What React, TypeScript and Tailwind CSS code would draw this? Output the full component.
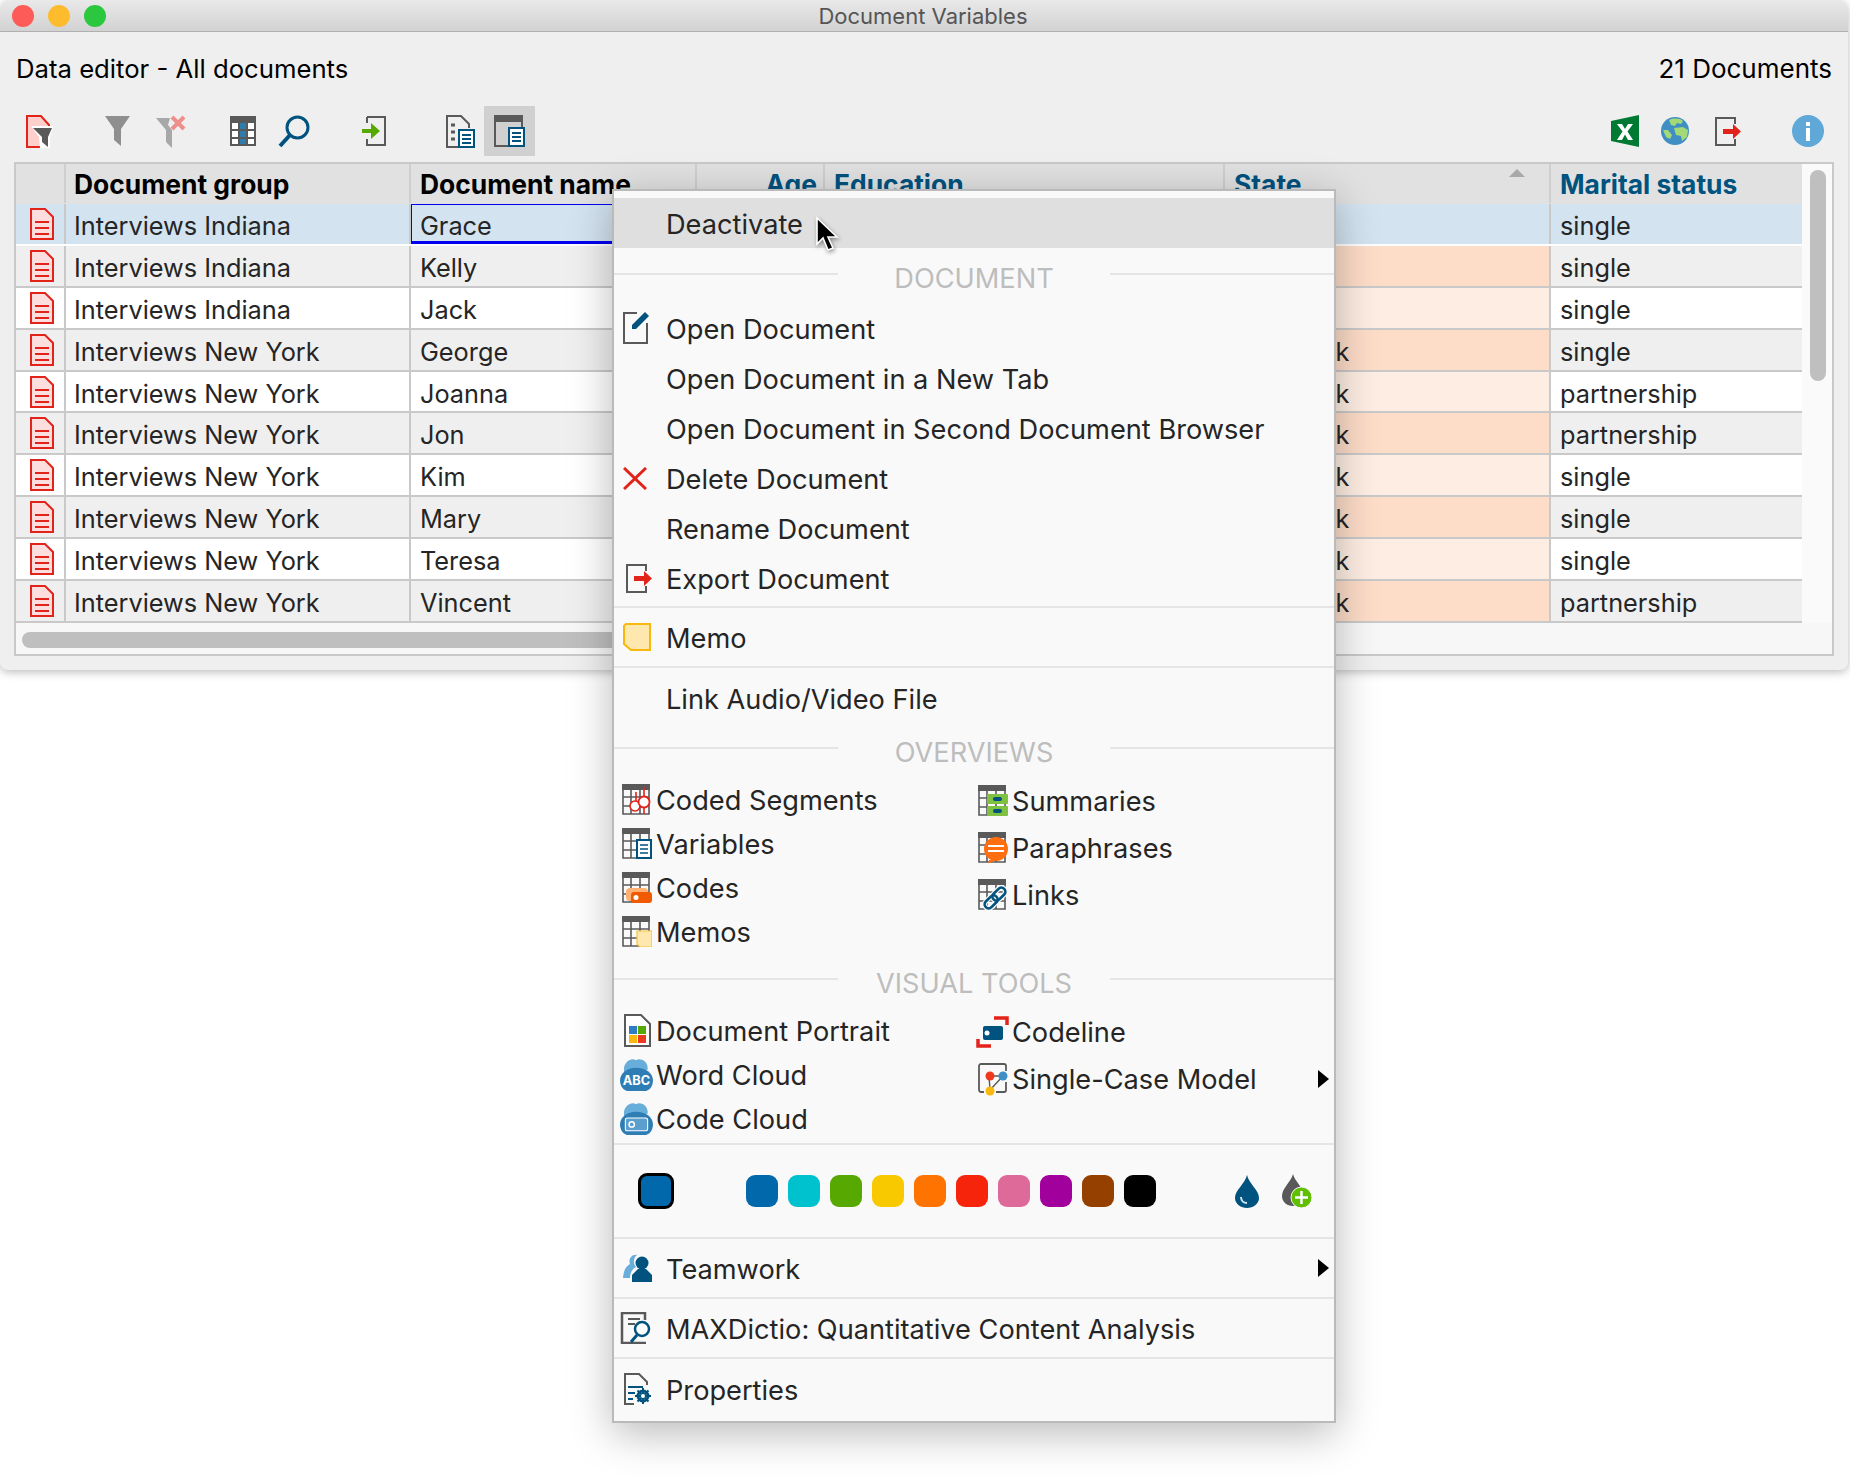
import React from 'react';

const RED = '#e2231a';
const BLUE = '#00527f';
const GRAY = '#595959';

type Row = { group: string; name: string; state: string; status: string };

const rows: Row[] = [
  { group: 'Interviews Indiana', name: 'Grace', state: 'Indiana', status: 'single' },
  { group: 'Interviews Indiana', name: 'Kelly', state: 'Indiana', status: 'single' },
  { group: 'Interviews Indiana', name: 'Jack', state: 'Indiana', status: 'single' },
  { group: 'Interviews New York', name: 'George', state: 'New York', status: 'single' },
  { group: 'Interviews New York', name: 'Joanna', state: 'New York', status: 'partnership' },
  { group: 'Interviews New York', name: 'Jon', state: 'New York', status: 'partnership' },
  { group: 'Interviews New York', name: 'Kim', state: 'New York', status: 'single' },
  { group: 'Interviews New York', name: 'Mary', state: 'New York', status: 'single' },
  { group: 'Interviews New York', name: 'Teresa', state: 'New York', status: 'single' },
  { group: 'Interviews New York', name: 'Vincent', state: 'New York', status: 'partnership' },
];

const swatches = ['bg-[#0068ab]', 'bg-[#00c2cf]', 'bg-[#57a800]', 'bg-[#f9c900]', 'bg-[#ff7300]', 'bg-[#f5240b]', 'bg-[#de6a9a]', 'bg-[#a1009c]', 'bg-[#964000]', 'bg-[#000000]'];

// Icons
function DocIcon() {
  return (
    <svg width="24" height="32" viewBox="0 0 24 32">
      <path d="M1 1H15L23 9V31H1Z" fill="#fddede" stroke={RED} strokeWidth="2" />
      <path d="M5 14H19M5 20H19M5 26H19" stroke={RED} strokeWidth="2" />
    </svg>
  );
}

function FilterDocIcon() {
  return (
    <svg width="27" height="33" viewBox="0 0 27 33">
      <path d="M1 1H15L23 10V32H1Z" fill="#ffcfcb" stroke={RED} strokeWidth="2" />
      <path d="M5 11H27L24 22V33H14L13 22Z" fill="#fff" />
      <path d="M7 13H26L22 22V32L16 27V22Z" fill={GRAY} />
    </svg>
  );
}

function FilterIcon() {
  return (
    <svg width="25" height="30" viewBox="0 0 25 30">
      <path d="M0 0H25L16 13V30L9 24V13Z" fill="#8f8f8f" />
    </svg>
  );
}

function FilterXIcon() {
  return (
    <svg width="30" height="33" viewBox="0 0 30 33">
      <path d="M0 3H14L12 10L16 15V33L10 27V15Z" fill="#a8a8a8" />
      <path d="M16 2L28 14M28 2L16 14" stroke="#ee8f8a" strokeWidth="4" />
    </svg>
  );
}

function ColumnsIcon() {
  return (
    <svg width="26" height="30" viewBox="0 0 26 30">
      <rect x="0" y="0" width="26" height="30" fill={GRAY} />
      <rect x="2" y="7" width="6" height="6" fill="#fff" />
      <rect x="2" y="15" width="6" height="6" fill="#fff" />
      <rect x="2" y="23" width="6" height="5" fill="#fff" />
      <rect x="10" y="7" width="6" height="6" fill="#2e7cab" />
      <rect x="10" y="15" width="6" height="6" fill="#2e7cab" />
      <rect x="10" y="23" width="6" height="5" fill="#2e7cab" />
      <rect x="18" y="7" width="6" height="6" fill="#fff" />
      <rect x="18" y="15" width="6" height="6" fill="#fff" />
      <rect x="18" y="23" width="6" height="5" fill="#fff" />
    </svg>
  );
}

function SearchIcon() {
  return (
    <svg width="32" height="33" viewBox="0 0 32 33">
      <circle cx="19.5" cy="12.5" r="10.5" fill="none" stroke={BLUE} strokeWidth="3" />
      <path d="M12 20L2 31" stroke={BLUE} strokeWidth="4" />
    </svg>
  );
}

function ImportIcon() {
  return (
    <svg width="24" height="30" viewBox="0 0 24 30">
      <path d="M5 1H23V29H5V23M5 7V1" fill="none" stroke={GRAY} strokeWidth="2" />
      <path d="M0 13H9V7L18 15L9 23V17H0Z" fill="#57a800" />
    </svg>
  );
}

function DocListIcon() {
  return (
    <svg width="29" height="33" viewBox="0 0 29 33">
      <path d="M13 32H1V1H15L23 9V13" fill="none" stroke={GRAY} strokeWidth="2" />
      <path d="M5 10H9M5 17H9M5 24H9" stroke={GRAY} strokeWidth="3" />
      <path d="M13 15H28V32H13Z" fill="#fff" stroke={BLUE} strokeWidth="2" />
      <path d="M16 20H25M16 24H25M16 28H25" stroke={BLUE} strokeWidth="2" />
    </svg>
  );
}

function WindowDocIcon() {
  return (
    <svg width="31" height="32" viewBox="0 0 31 32">
      <path d="M1 1H28V12M14 31H1V1" fill="none" stroke={GRAY} strokeWidth="2" />
      <rect x="0" y="0" width="28" height="7" fill={GRAY} />
      <path d="M15 13H30V31H15Z" fill="#fff" stroke={BLUE} strokeWidth="2" />
      <path d="M18 18H27M18 22H27M18 26H27" stroke={BLUE} strokeWidth="2" />
    </svg>
  );
}

function ExcelIcon() {
  return (
    <svg width="28" height="32" viewBox="0 0 28 32">
      <path d="M0 6L28 0V32L0 26Z" fill="#007a33" />
      <path d="M6 9H11L14 14L17 9H22L16.5 16.5L22 25H17L14 19.5L11 25H6L11.5 16.5Z" fill="#fff" />
    </svg>
  );
}

function GlobeIcon() {
  return (
    <svg width="28" height="28" viewBox="0 0 28 28">
      <circle cx="14" cy="14" r="14" fill="#3f8ec4" />
      <path d="M8 3C12 1 19 1 22 4L20 7L16 6L14 9L10 8ZM13 11L22 10L27 13L26 20L21 24L20 19L15 18ZM2 13L7 13L11 18L9 22L5 20Z" fill="#a3d977" />
    </svg>
  );
}

function ExportIcon() {
  return (
    <svg width="27" height="29" viewBox="0 0 27 29">
      <path d="M20 7V1H1V28H20V22" fill="none" stroke={GRAY} strokeWidth="2" />
      <path d="M8 12H18V7L26 14.5L18 22V17H8Z" fill={RED} />
    </svg>
  );
}

function InfoIcon() {
  return (
    <svg width="32" height="32" viewBox="0 0 32 32">
      <circle cx="16" cy="16" r="16" fill="#5fa8d8" />
      <rect x="14" y="7" width="4" height="4" fill="#fff" />
      <rect x="14" y="13" width="4" height="13" fill="#fff" />
    </svg>
  );
}

function OpenIcon() {
  return (
    <svg width="26" height="32" viewBox="0 0 26 32">
      <path d="M14 1H1V31H24V11" fill="none" stroke={GRAY} strokeWidth="2" />
      <path d="M9 13L22 0L26 4L13 17H9Z" fill={BLUE} />
    </svg>
  );
}

function DeleteIcon() {
  return (
    <svg width="24" height="23" viewBox="0 0 24 23">
      <path d="M1 1L23 22M23 1L1 22" stroke={RED} strokeWidth="3" />
    </svg>
  );
}

function MemoIcon() {
  return (
    <svg width="28" height="28" viewBox="0 0 28 28">
      <path d="M3 1H27V27H8L1 21V3Z" fill="#ffe8ad" stroke="#f9b80d" strokeWidth="2" />
    </svg>
  );
}

function TableBase({ children }: { children?: React.ReactNode }) {
  return (
    <svg width="30" height="31" viewBox="0 0 30 31">
      <path d="M1 6V30H27V6M1 13H27M1 22H27M9 6V30M18 6V30" fill="none" stroke={GRAY} strokeWidth="1.6" />
      <rect x="0" y="0" width="28" height="6" fill={GRAY} />
      {children}
    </svg>
  );
}

function CloudBack() {
  return <path d="M4 14C2 6 10 0 15 3C19 0 27 4 26 12Z" fill="#67aedb" />;
}

function TeamIcon() {
  return (
    <svg width="29" height="28" viewBox="0 0 29 28">
      <path d="M0 24C1 14 4 12 7 10C5 5 9 0 14 1C10 4 10 10 13 13C9 15 7 19 7 24Z" fill="#67aedb" />
      <circle cx="19" cy="9" r="6.5" fill={BLUE} />
      <path d="M9 28V21L15 15H23L29 21V28Z" fill={BLUE} />
    </svg>
  );
}

function DictioIcon() {
  return (
    <svg width="33" height="32" viewBox="0 0 33 32">
      <path d="M25 8V1H2V31H26" fill="none" stroke={GRAY} strokeWidth="2.5" />
      <path d="M8 7H20M8 12H15" stroke={GRAY} strokeWidth="2" />
      <circle cx="22" cy="17" r="7" fill="#fff" stroke={BLUE} strokeWidth="2.5" />
      <path d="M17 23L11 30" stroke={BLUE} strokeWidth="3" />
    </svg>
  );
}

function PropsIcon() {
  return (
    <svg width="28" height="32" viewBox="0 0 28 32">
      <path d="M10 31H1V1H15L23 9V12" fill="none" stroke={GRAY} strokeWidth="2" />
      <path d="M4 14H19M4 20H11M4 26H9" stroke={BLUE} strokeWidth="2" />
      <circle cx="19" cy="23" r="5" fill="none" stroke={BLUE} strokeWidth="3" />
      <path d="M19 15V31M11 23H27M13.5 17.5L24.5 28.5M24.5 17.5L13.5 28.5" stroke={BLUE} strokeWidth="2" />
      <circle cx="19" cy="23" r="2" fill="#fff" />
    </svg>
  );
}

function DropIcon() {
  return (
    <svg width="24" height="33" viewBox="0 0 24 33">
      <path d="M12 0C14 9 24 15 24 23C24 29 18 33 12 33C6 33 0 29 0 23C0 15 10 9 12 0Z" fill={BLUE} />
      <path d="M6 22C6 26 9 28 12 28" fill="none" stroke="#cfe3ef" strokeWidth="2" />
    </svg>
  );
}

function DropPlusIcon() {
  return (
    <svg width="30" height="34" viewBox="0 0 30 34">
      <path d="M11 0C13 8 22 14 22 22C22 28 16 32 11 32C5 32 0 28 0 22C0 14 9 8 11 0Z" fill={GRAY} />
      <circle cx="19.5" cy="23.5" r="10.5" fill="#5fbf00" stroke="#f9f9f9" strokeWidth="1" />
      <path d="M19.5 17V30M13 23.5H26" stroke="#fff" strokeWidth="2.5" />
    </svg>
  );
}

function Arrow() {
  return (
    <svg width="11" height="18" viewBox="0 0 11 18">
      <path d="M0 0L11 9L0 18Z" fill="#000" />
    </svg>
  );
}

const leftOverviews: [string, React.ReactNode][] = [
  ['Coded Segments', <TableBase><path d="M22 3V30" stroke={RED} strokeWidth="1.6" /><path d="M14 8V18" stroke={RED} strokeWidth="1.6" /><circle cx="13" cy="22" r="5" fill="#fff" stroke={RED} strokeWidth="1.6" /><circle cx="22" cy="18" r="5.5" fill="#fff" stroke={RED} strokeWidth="1.8" /></TableBase>],
  ['Variables', <TableBase><path d="M15 12H29V30H15Z" fill="#fff" stroke={BLUE} strokeWidth="2" /><path d="M18 17H26M18 21H26M18 25H26" stroke={BLUE} strokeWidth="1.6" /></TableBase>],
  ['Codes', <TableBase><rect x="4" y="16" width="22" height="13" rx="4" fill="#ffb072" /><rect x="9" y="20" width="21" height="11" rx="3" fill="#f15a00" /><circle cx="14" cy="25.5" r="2.5" fill="#fff" /></TableBase>],
  ['Memos', <TableBase><path d="M15 15H30V31H18L15 28Z" fill="#ffe8ad" stroke="#f9c23c" strokeWidth="1.2" /></TableBase>],
];

const rightOverviews: [string, React.ReactNode][] = [
  ['Summaries', <TableBase><rect x="9" y="9" width="21" height="10" rx="1" fill="#7fc241" /><rect x="9" y="21" width="21" height="10" rx="1" fill="#7fc241" /><rect x="15" y="12" width="9" height="4" rx="2" fill={BLUE} /><rect x="15" y="24" width="9" height="4" rx="2" fill={BLUE} /></TableBase>],
  ['Paraphrases', <TableBase><circle cx="18" cy="17" r="12" fill="#ff6f0f" /><path d="M11 28L10 32L18 28Z" fill="#ff6f0f" /><path d="M10 14H26M10 19H26" stroke="#fff" strokeWidth="2" /></TableBase>],
  ['Links', <TableBase><g transform="rotate(-45 17 19)" fill="none" stroke={BLUE} strokeWidth="2.6"><rect x="4" y="15" width="15" height="8" rx="4" stroke="#f9f9f9" strokeWidth="5" /><rect x="15" y="15" width="15" height="8" rx="4" stroke="#f9f9f9" strokeWidth="5" /><rect x="4" y="15" width="15" height="8" rx="4" /><rect x="15" y="15" width="15" height="8" rx="4" /></g></TableBase>],
];

const leftVisual: [string, React.ReactNode][] = [
  ['Document Portrait', (
    <svg className="ml-[2px]" width="28" height="33" viewBox="0 0 28 33">
      <path d="M1 1H17L26 10V32H1Z" fill="#fff" stroke={GRAY} strokeWidth="2" />
      <rect x="5" y="12" width="8" height="8" fill="#2e7cc4" />
      <rect x="14" y="12" width="8" height="8" fill="#57a800" />
      <rect x="5" y="21" width="8" height="8" fill="#f9b80d" />
      <rect x="14" y="21" width="8" height="8" fill="#ee3a1c" />
    </svg>
  )],
  ['Word Cloud', (
    <svg className="-ml-[2px]" width="33" height="34" viewBox="0 0 31 32">
      <CloudBack />
      <path d="M0 22C0 15 7 10 15 10C24 10 31 15 31 22C31 28 27 32 23 32H8C4 32 0 28 0 22Z" fill="#2e7eb5" />
      <text x="15.5" y="26" fontSize="12" fontWeight="700" fill="#fff" textAnchor="middle" fontFamily="Inter, sans-serif">ABC</text>
    </svg>
  )],
  ['Code Cloud', (
    <svg className="-ml-[2px]" width="33" height="34" viewBox="0 0 31 32">
      <CloudBack />
      <path d="M0 22C0 15 7 10 15 10C24 10 31 15 31 22C31 28 27 32 23 32H8C4 32 0 28 0 22Z" fill="#2e7eb5" />
      <rect x="5" y="16" width="21" height="12" rx="2" fill="#5b9fce" stroke="#fff" />
      <circle cx="11" cy="22" r="2.5" fill="none" stroke="#fff" strokeWidth="1.4" />
    </svg>
  )],
];

const rightVisual: [string, React.ReactNode][] = [
  ['Codeline', (
    <svg className="-ml-[2px]" width="33" height="32" viewBox="0 0 33 32">
      <path d="M18 2H31V9M2 23V30H15" fill="none" stroke={RED} strokeWidth="3.5" />
      <rect x="7" y="10" width="20" height="14" rx="2" fill={BLUE} />
      <circle cx="11" cy="17" r="2.5" fill="#fff" />
    </svg>
  )],
  ['Single-Case Model', (
    <svg width="30" height="34" viewBox="0 0 30 34">
      <path d="M6 30H3C2 30 1 29 1 28V4C1 3 2 2 3 2H26C27 2 28 3 28 4V9M28 20V28C28 29 27 30 26 30H18" fill="none" stroke={GRAY} strokeWidth="1.8" />
      <path d="M11 14L25 14M11 14L12 28M25 14L12 28" fill="none" stroke={GRAY} strokeWidth="1.4" />
      <circle cx="12" cy="14" r="4.5" fill="#ee3a1c" />
      <circle cx="25" cy="14" r="4.5" fill="#3f8ec4" />
      <circle cx="12" cy="29" r="4.5" fill="#f9b80d" />
    </svg>
  )],
];

function Separator() {
  return <div className="h-[2px] bg-[#e5e5e5]" />;
}

function Heading({ label }: { label: string }) {
  return (
    <div className="grid h-[55px] grid-cols-[1fr_272px_1fr]">
      <div className="mt-[25px] h-[2px] bg-[#e5e5e5]" />
      <div className="pt-[14px] text-center leading-[34px] text-[#bdbdbd]">{label}</div>
      <div className="mt-[25px] h-[2px] bg-[#e5e5e5]" />
    </div>
  );
}

function MenuItem({ label, icon, className = 'h-[50px]' }: { label: string; icon?: React.ReactNode; className?: string }) {
  return (
    <div className={`flex items-center ${className}`}>
      <div className="flex w-[52px] shrink-0 items-center pl-[9px]">{icon}</div>
      <span className="pt-[3px]">{label}</span>
    </div>
  );
}

function ToolCell({ label, icon, tall }: { label: string; icon: React.ReactNode; tall?: boolean }) {
  return (
    <div className={`flex items-center ${tall ? 'h-[47px]' : 'h-[44px]'}`}>
      <div className="flex w-[34px] shrink-0 items-center">{icon}</div>
      <span className="pt-[3px]">{label}</span>
    </div>
  );
}

function TableRow({ row, index }: { row: Row; index: number }) {
  const selected = index === 0;
  const gray = index % 2 === 1;
  const bg = selected ? 'bg-[#d3e3f0]' : gray ? 'bg-[#efefef]' : 'bg-white';
  const stateBg = selected ? 'bg-[#d3e3f0]' : gray ? 'bg-[#fddcc8]' : 'bg-[#feede2]';
  return (
    <div className={`flex h-[41.9px] border-b-2 border-[#c9c9c9] ${bg} ${selected ? 'border-b-white' : ''}`}>
      <div className="flex w-[50px] shrink-0 items-center justify-center border-r-2 border-[#c9c9c9] pl-[3px]">
        <DocIcon />
      </div>
      <div className="flex w-[345px] shrink-0 items-center border-r-2 border-[#c9c9c9] pl-[8px] pt-[4px]">{row.group}</div>
      <div className={`flex w-[286px] shrink-0 items-center pl-[9px] ${selected ? 'border-t border-b-[3px] border-l border-[#0000ee] !pl-[8px] pt-[6px]' : 'pt-[4px]'}`}>{row.name}</div>
      <div className="w-[128px] shrink-0" />
      <div className="w-[400px] shrink-0" />
      <div className={`flex w-[326px] shrink-0 items-center border-r-2 border-[#c9c9c9] pl-[9px] pt-[4px] ${stateBg}`}>{row.state}</div>
      <div className="flex w-[251px] shrink-0 items-center pl-[9px] pt-[4px]">{row.status}</div>
    </div>
  );
}

function DataWindow() {
  return (
    <div className="h-[670px] w-[1848px] overflow-hidden rounded-t-[10px] rounded-b-[8px] bg-[#efefef] shadow-[0_2px_10px_rgba(0,0,0,0.28)]">
      <div className="relative flex h-[32px] items-center justify-center border-b border-[#b0b0b0] bg-gradient-to-b from-[#e9e9e9] to-[#d2d2d2] pr-[2px] text-[22px] text-[#555555]">
        <div className="absolute left-[12px] top-[5px] flex gap-[14px]">
          <div className="h-[22px] w-[22px] rounded-full bg-[#fc5b57]" />
          <div className="h-[22px] w-[22px] rounded-full bg-[#fdbc2e]" />
          <div className="h-[22px] w-[22px] rounded-full bg-[#2ac73f]" />
        </div>
        Document Variables
      </div>
      <div className="flex h-[74px] items-center justify-between pl-[16px] pr-[16px] text-black">
        <span className="text-[25.7px]">Data editor - All documents</span>
        <span>21 Documents</span>
      </div>
      <div className="flex h-[50px] items-center pr-[24px]">
        <div className="ml-[26px]"><FilterDocIcon /></div>
        <div className="ml-[52px]"><FilterIcon /></div>
        <div className="ml-[26px]"><FilterXIcon /></div>
        <div className="ml-[44px]"><ColumnsIcon /></div>
        <div className="ml-[22px]"><SearchIcon /></div>
        <div className="ml-[52px]"><ImportIcon /></div>
        <div className="ml-[60px]"><DocListIcon /></div>
        <div className="ml-[9px] flex h-[50px] w-[51px] items-center justify-center bg-[#d0d0d0]"><WindowDocIcon /></div>
        <div className="ml-auto"><ExcelIcon /></div>
        <div className="ml-[22px]"><GlobeIcon /></div>
        <div className="ml-[26px]"><ExportIcon /></div>
        <div className="ml-[50px]"><InfoIcon /></div>
      </div>
      <div className="ml-[14px] mt-[6px] w-[1820px] border-2 border-[#c9c9c9] bg-white text-[25.3px] text-[#252525]">
        <div className="flex">
          <div className="w-[1786px] shrink-0">
            <div className="flex h-[40px] border-b border-[#e1e1e1] bg-[#e1e1e1] text-[26.4px] font-bold leading-[41px] text-black">
              <div className="w-[50px] shrink-0 border-r-2 border-[#cfcfcf]" />
              <div className="w-[345px] shrink-0 border-r-2 border-[#cfcfcf] pl-[8px]">Document group</div>
              <div className="w-[286px] shrink-0 border-r-2 border-[#cfcfcf] pl-[9px]">Document name</div>
              <div className="w-[128px] shrink-0 border-r-2 border-[#cfcfcf] pr-[6px] text-right text-[#00527f]">Age</div>
              <div className="w-[400px] shrink-0 border-r-2 border-[#cfcfcf] pl-[9px] text-[#00527f]">Education</div>
              <div className="relative w-[326px] shrink-0 border-r-2 border-[#cfcfcf] pl-[9px] text-[#00527f]">
                State
                <div className="absolute right-[24px] top-[5px] h-0 w-0 border-x-[8px] border-b-[8px] border-x-transparent border-b-[#a8a8a8]" />
              </div>
              <div className="w-[251px] shrink-0 pl-[9px] text-[#00527f]">Marital status</div>
            </div>
            {rows.map((row, i) => (
              <TableRow key={row.name} row={row} index={i} />
            ))}
          </div>
          <div className="w-[30px] shrink-0 bg-[#fafafa] pl-[8px] pt-[6px]">
            <div className="h-[211px] w-[16px] rounded-full bg-[#bfbfbf]" />
          </div>
        </div>
        <div className="h-[31px] bg-[#f7f7f7] pl-[6px] pt-[9px]">
          <div className="h-[16px] w-[1000px] rounded-full bg-[#bfbfbf]" />
        </div>
      </div>
    </div>
  );
}

function ContextMenu() {
  return (
    <div className="absolute left-[612px] top-[189px] w-[724px] border-2 border-[#bababa] bg-[#f9f9f9] pt-[7px] pb-[2px] text-[27.2px] text-[#252525] shadow-[0_10px_40px_rgba(0,0,0,0.28)]">
      <MenuItem label="Deactivate" className="h-[50px] bg-[#dfdfdf]" />
      <Heading label="DOCUMENT" />
      <MenuItem label="Open Document" icon={<OpenIcon />} />
      <MenuItem label="Open Document in a New Tab" />
      <MenuItem label="Open Document in Second Document Browser" />
      <MenuItem label="Delete Document" icon={<DeleteIcon />} />
      <MenuItem label="Rename Document" />
      <MenuItem label="Export Document" icon={<div className="pl-[3px]"><ExportIcon /></div>} />
      <div className="mt-[3px]"><Separator /></div>
      <MenuItem label="Memo" icon={<MemoIcon />} className="h-[58px]" />
      <Separator />
      <MenuItem label="Link Audio/Video File" className="h-[54px] pt-[6px]" />
      <Heading label="OVERVIEWS" />
      <div className="flex">
        <div className="w-[364px] shrink-0 pl-[8px]">
          {leftOverviews.map(([label, icon]) => <ToolCell key={label} label={label} icon={icon} />)}
        </div>
        <div>
          {rightOverviews.map(([label, icon]) => <ToolCell key={label} label={label} icon={icon} tall />)}
        </div>
      </div>
      <Heading label="VISUAL TOOLS" />
      <div className="relative flex">
        <div className="w-[364px] shrink-0 pl-[8px]">
          {leftVisual.map(([label, icon]) => <ToolCell key={label} label={label} icon={icon} />)}
        </div>
        <div>
          {rightVisual.map(([label, icon]) => <ToolCell key={label} label={label} icon={icon} tall />)}
        </div>
        <div className="absolute left-[704px] top-[62px]"><Arrow /></div>
      </div>
      <div className="mt-[3px]"><Separator /></div>
      <div className="flex h-[92px] items-center pl-[24px]">
        <div className="h-[36px] w-[36px] rounded-[9px] border-[3px] border-black bg-[#0068ab]" />
        <div className="ml-[72px] flex gap-[10px]">
          {swatches.map((s) => <div key={s} className={`h-[32px] w-[32px] rounded-[9px] ${s}`} />)}
        </div>
        <div className="ml-[79px]"><DropIcon /></div>
        <div className="ml-[23px]"><DropPlusIcon /></div>
      </div>
      <Separator />
      <div className="relative">
        <MenuItem label="Teamwork" icon={<TeamIcon />} className="h-[58px]" />
        <div className="absolute left-[704px] top-[20px]"><Arrow /></div>
      </div>
      <Separator />
      <MenuItem label="MAXDictio: Quantitative Content Analysis" icon={<div className="-ml-[3px]"><DictioIcon /></div>} className="h-[58px]" />
      <Separator />
      <MenuItem label="Properties" icon={<div className="pl-[1px]"><PropsIcon /></div>} className="h-[60px]" />
    </div>
  );
}

function Cursor() {
  return (
    <svg className="absolute left-[815px] top-[216px] drop-shadow-[1px_2px_2px_rgba(0,0,0,0.4)]" width="24" height="37" viewBox="0 0 24 37">
      <path d="M2 2V28L8 22L13 34L18 32L13 21H22Z" fill="#000" stroke="#fff" strokeWidth="1.6" />
    </svg>
  );
}

export default function App() {
  return (
    <div className="relative h-[1478px] w-[1850px] overflow-hidden bg-white font-['Inter',sans-serif] text-[26px] leading-[34px]">
      <DataWindow />
      <ContextMenu />
      <Cursor />
    </div>
  );
}
